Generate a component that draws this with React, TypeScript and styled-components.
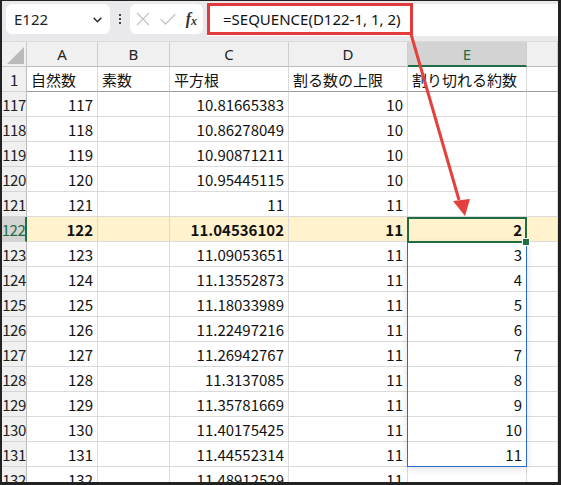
import React from 'react';
import styled, { createGlobalStyle } from 'styled-components';

const GlobalStyle = createGlobalStyle`
  html, body { margin: 0; padding: 0; background: #222; }
  body { font-family: "Noto Sans CJK JP", "Noto Sans", sans-serif; }
`;

type Row = { n: number; a: string; c: string; d: string; e?: string };

const rows: Row[] = [
  { n: 117, a: '117', c: '10.81665383', d: '10' },
  { n: 118, a: '118', c: '10.86278049', d: '10' },
  { n: 119, a: '119', c: '10.90871211', d: '10' },
  { n: 120, a: '120', c: '10.95445115', d: '10' },
  { n: 121, a: '121', c: '11', d: '11' },
  { n: 122, a: '122', c: '11.04536102', d: '11', e: '2' },
  { n: 123, a: '123', c: '11.09053651', d: '11', e: '3' },
  { n: 124, a: '124', c: '11.13552873', d: '11', e: '4' },
  { n: 125, a: '125', c: '11.18033989', d: '11', e: '5' },
  { n: 126, a: '126', c: '11.22497216', d: '11', e: '6' },
  { n: 127, a: '127', c: '11.26942767', d: '11', e: '7' },
  { n: 128, a: '128', c: '11.3137085', d: '11', e: '8' },
  { n: 129, a: '129', c: '11.35781669', d: '11', e: '9' },
  { n: 130, a: '130', c: '11.40175425', d: '11', e: '10' },
  { n: 131, a: '131', c: '11.44552314', d: '11', e: '11' },
  { n: 132, a: '132', c: '11.48912529', d: '11' },
];

const ACTIVE = 122;
const ROW_H = 25;

const App: React.FC = () => (
  <>
    <GlobalStyle />
    <Frame>
      <FormulaBar>
        <NameBox>
          <span>E122</span>
          <Chevron viewBox="0 0 12 12">
            <path d="M2.5 4.5 L6 8 L9.5 4.5" fill="none" stroke="#333" strokeWidth="1.4" />
          </Chevron>
        </NameBox>
        <Dots>
          <i />
          <i />
          <i />
        </Dots>
        <FxBox>
          <svg width="16" height="16" viewBox="0 0 16 16">
            <path d="M2 2 L14 14 M14 2 L2 14" stroke="#c4c4c4" strokeWidth="1.3" />
          </svg>
          <svg width="18" height="16" viewBox="0 0 18 16">
            <path d="M1.5 8 L6.5 13 L16.5 3" fill="none" stroke="#c4c4c4" strokeWidth="1.3" />
          </svg>
          <Fx>
            f<sub>x</sub>
          </Fx>
        </FxBox>
        <FormulaInput>
          <FormulaHighlight>=SEQUENCE(D122-1, 1, 2)</FormulaHighlight>
        </FormulaInput>
      </FormulaBar>
      <SheetWrap>
        <Sheet>
          <Corner>
            <svg width="20" height="20" viewBox="0 0 20 20">
              <path d="M19 2 L19 19 L2 19 Z" fill="#b9b9b9" />
            </svg>
          </Corner>
          {['A', 'B', 'C', 'D', 'E', ''].map((c) => (
            <ColHead key={c || 'F'} $selected={c === 'E'}>
              {c}
            </ColHead>
          ))}
          <RowHead>1</RowHead>
          <Cell $titleRow>自然数</Cell>
          <Cell $titleRow>素数</Cell>
          <Cell $titleRow>平方根</Cell>
          <Cell $titleRow>割る数の上限</Cell>
          <Cell $titleRow>割り切れる約数</Cell>
          <Cell $titleRow />
          {rows.map((r) => {
            const on = r.n === ACTIVE;
            return (
              <React.Fragment key={r.n}>
                <RowHead $selected={on}>{r.n}</RowHead>
                <Cell $num $active={on}>{r.a}</Cell>
                <Cell $active={on} />
                <Cell $num $active={on}>{r.c}</Cell>
                <Cell $num $active={on}>{r.d}</Cell>
                <Cell $num $active={on}>{r.e}</Cell>
                <Cell $active={on} />
              </React.Fragment>
            );
          })}
        </Sheet>
        <SpillRange style={{ top: ROW_H * 8 }} />
        <ActiveCell style={{ top: ROW_H * 7 }}>
          <Handle />
        </ActiveCell>
      </SheetWrap>
      <Arrow width="561" height="485" viewBox="0 0 561 485">
        <line x1="411" y1="34" x2="459" y2="200" stroke="#e5403b" strokeWidth="3" />
        <path d="M453 201 L470 199 L465 216 Z" fill="#e5403b" />
      </Arrow>
    </Frame>
  </>
);

export default App;

const Frame = styled.div`
  position: relative;
  box-sizing: border-box;
  width: 561px;
  height: 485px;
  overflow: hidden;
  background: #fff;
  border-left: 2px solid #222;
  border-right: 3px solid #222;
  border-bottom: 3px solid #222;
  border-top: 1px solid #222;
  color: #111;
`;

const FormulaBar = styled.div`
  display: flex;
  align-items: center;
  height: 41px;
  box-sizing: border-box;
  padding: 3px 0 7px 4px;
  background: #e9e9ec;
  border-bottom: 1px solid #dadada;
`;

const NameBox = styled.div`
  display: flex;
  align-items: center;
  justify-content: space-between;
  box-sizing: border-box;
  width: 104px;
  height: 30px;
  padding: 0 6px 0 8px;
  background: #fff;
  border-radius: 6px;
  font-family: "Noto Sans", sans-serif;
  font-size: 15px;
  color: #222;
`;

const Chevron = styled.svg`
  width: 13px;
  height: 13px;
`;

const Dots = styled.div`
  display: flex;
  flex-direction: column;
  gap: 2px;
  width: 20px;
  align-items: center;
  i {
    width: 2px;
    height: 2px;
    background: #444;
  }
`;

const FxBox = styled.div`
  display: flex;
  align-items: center;
  justify-content: space-between;
  box-sizing: border-box;
  width: 73px;
  height: 30px;
  padding: 0 6px 0 5px;
  background: #fff;
  border-radius: 6px;
`;

const Fx = styled.span`
  font-family: "Liberation Serif", serif;
  font-style: italic;
  font-weight: bold;
  font-size: 16px;
  color: #333;
  sub {
    font-size: 12px;
    vertical-align: -1px;
  }
`;

const FormulaInput = styled.div`
  display: flex;
  align-items: center;
  align-self: stretch;
  flex: 1;
  margin-left: 4px;
  background: #fff;
  margin-bottom: -2px;
`;

const FormulaHighlight = styled.div`
  display: flex;
  align-items: center;
  box-sizing: border-box;
  width: 206px;
  height: 32px;
  margin-top: -2px;
  padding-left: 13px;
  border: 3px solid #e23b3b;
  font-family: "Noto Sans", sans-serif;
  font-size: 15px;
  color: #111;
`;

const SheetWrap = styled.div`
  position: relative;
`;

const Sheet = styled.div`
  display: grid;
  grid-template-columns: 25px 71px 72px 119px 119px 119px 1fr;
  grid-auto-rows: ${ROW_H}px;
  font-size: 15px;
`;

const Corner = styled.div`
  display: flex;
  align-items: flex-end;
  justify-content: flex-end;
  background: #f0f0f0;
  border-right: 1px solid #c8c8c8;
  border-bottom: 1px solid #c8c8c8;
  box-sizing: border-box;
  padding: 0 1px 1px 0;
`;

const ColHead = styled.div<{ $selected?: boolean }>`
  display: flex;
  align-items: center;
  justify-content: center;
  box-sizing: border-box;
  background: ${(p) => (p.$selected ? '#d3d3d3' : '#f0f0f0')};
  color: ${(p) => (p.$selected ? '#1f6e43' : '#222')};
  border-right: 1px solid #cfcfcf;
  border-bottom: ${(p) => (p.$selected ? '2px solid #1f6e43' : '1px solid #bdbdbd')};
  font-family: "Noto Sans", sans-serif;
  font-size: 15px;
`;

const RowHead = styled.div<{ $selected?: boolean }>`
  display: flex;
  align-items: center;
  justify-content: center;
  box-sizing: border-box;
  overflow: visible;
  white-space: nowrap;
  background: ${(p) => (p.$selected ? '#d3d3d3' : '#f0f0f0')};
  color: ${(p) => (p.$selected ? '#1f6e43' : '#222')};
  border-right: ${(p) => (p.$selected ? '2px solid #1f6e43' : '1px solid #bdbdbd')};
  border-bottom: 1px solid #d4d4d4;
  font-family: "Noto Sans CJK JP", sans-serif;
  font-size: 15px;
  letter-spacing: -0.5px;
`;

const Cell = styled.div<{ $num?: boolean; $active?: boolean; $titleRow?: boolean }>`
  display: flex;
  align-items: center;
  justify-content: ${(p) => (p.$num ? 'flex-end' : 'flex-start')};
  box-sizing: border-box;
  padding: 0 4px;
  overflow: visible;
  white-space: nowrap;
  background: ${(p) => (p.$active ? '#fff2cc' : '#fff')};
  font-weight: ${(p) => (p.$active ? 700 : 400)};
  border-right: 1px solid #dadada;
  border-bottom: ${(p) => (p.$titleRow ? '1px solid #9c9c9c' : '1px solid #dadada')};
  font-size: 15px;
  color: #111;
`;

const SpillRange = styled.div`
  position: absolute;
  left: 405px;
  width: 120px;
  height: ${ROW_H * 9}px;
  box-sizing: border-box;
  border: 1px solid #2d6ad6;
  box-shadow: 0 2px 8px rgba(0, 0, 0, 0.12);
  pointer-events: none;
`;

const ActiveCell = styled.div`
  position: absolute;
  left: 405px;
  width: 120px;
  height: ${ROW_H + 1}px;
  box-sizing: border-box;
  border: 2px solid #1f6e43;
  pointer-events: none;
`;

const Handle = styled.div`
  position: absolute;
  right: -5px;
  bottom: -5px;
  width: 6px;
  height: 6px;
  background: #1f6e43;
  border: 1px solid #fff;
`;

const Arrow = styled.svg`
  position: absolute;
  left: -2px;
  top: -1px;
  pointer-events: none;
`;
